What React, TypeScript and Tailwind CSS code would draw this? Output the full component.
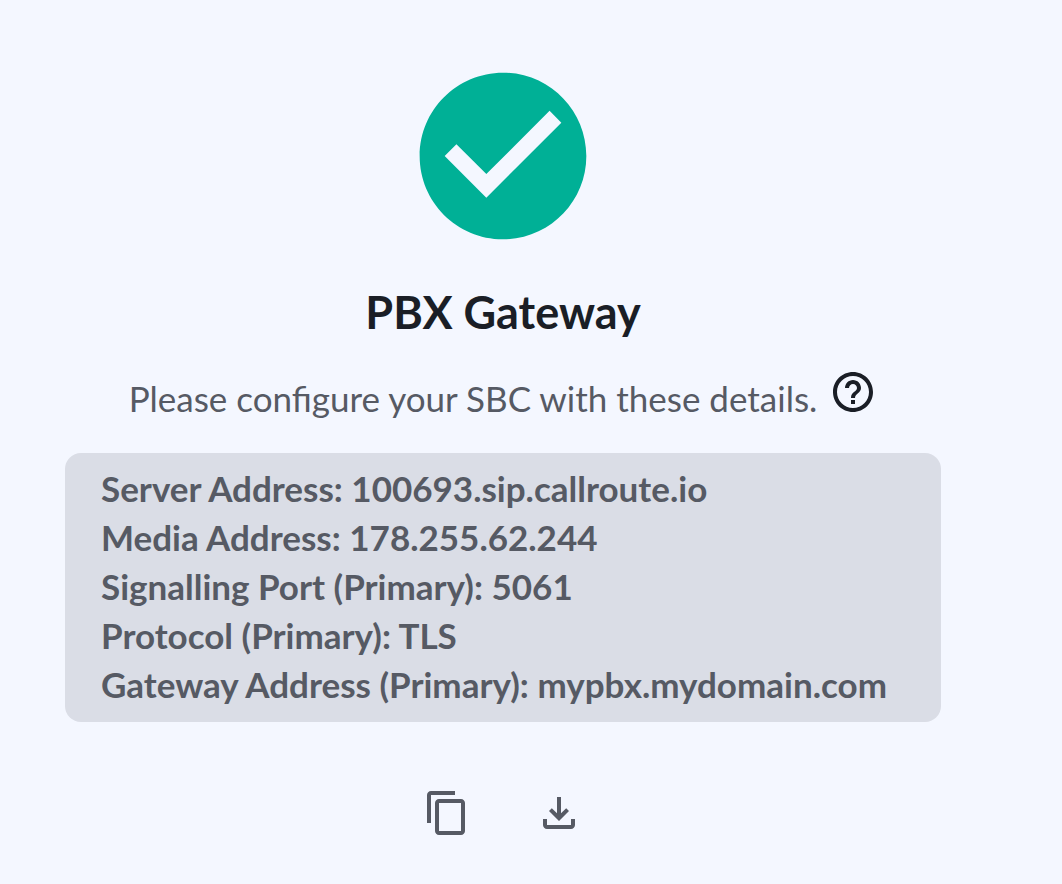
import React from "react";

const details = [
  { label: "Server Address", value: "100693.sip.callroute.io" },
  { label: "Media Address", value: "178.255.62.244" },
  { label: "Signalling Port (Primary)", value: "5061" },
  { label: "Protocol (Primary)", value: "TLS" },
  { label: "Gateway Address (Primary)", value: "mypbx.mydomain.com" },
];

export default function App() {
  return (
    <main className="flex min-h-screen flex-col items-center bg-[#f4f7ff] pt-[56px] pr-[121px] pb-[44px] pl-[65px] font-[Lato,sans-serif] text-[#565a64]">
      <svg viewBox="0 0 24 24" className="size-[200px]" aria-hidden="true">
        <path
          fill="#00b096"
          d="M12 2C6.48 2 2 6.48 2 12s4.480 10 10 10 10-4.480 10-10S17.520 2 12 2zm-2 15l-5-5 1.410-1.410L10 14.170l7.590-7.590L19 8l-9 9z"
        />
      </svg>
      <h1 className="mt-[28px] text-[45px] leading-[56px] font-bold text-[#1a1e26]">PBX Gateway</h1>
      <div className="mt-[28px] flex items-start gap-[12px]">
        <p className="pt-[6px] pb-[2px] text-[35px] leading-[48px]">Please configure your SBC with these details.</p>
        <button type="button" aria-label="Help" className="text-[#1a1e26]">
          <svg viewBox="0 0 24 24" className="size-[48px]" fill="currentColor" aria-hidden="true">
            <path d="M11 18h2v-2h-2v2zm1-16C6.480 2 2 6.480 2 12s4.480 10 10 10 10-4.480 10-10S17.520 2 12 2zm0 18c-4.410 0-8-3.590-8-8s3.590-8 8-8 8 3.590 8 8-3.590 8-8 8zm0-14c-2.210 0-4 1.790-4 4h2c0-1.100.9-2 2-2s2 .9 2 2c0 2-3 1.750-3 5h2c0-2.250 3-2.500 3-5 0-2.210-1.790-4-4-4z" />
          </svg>
        </button>
      </div>
      <ul className="mt-[29px] w-full rounded-[16px] bg-[#dadde6] px-[36px] pt-[11px] pb-[13px] text-[35px] leading-[49px] font-bold">
        {details.map((item) => (
          <li key={item.label}>
            {item.label}: {item.value}
          </li>
        ))}
      </ul>
      <div className="mt-[67px] flex items-center gap-[64px]">
        <button type="button" aria-label="Copy">
          <svg viewBox="0 0 24 24" className="size-[48px]" fill="currentColor" aria-hidden="true">
            <path d="M16 1H4c-1.100 0-2 .9-2 2v14h2V3h12V1zm3 4H8c-1.100 0-2 .9-2 2v14c0 1.100.9 2 2 2h11c1.100 0 2-.9 2-2V7c0-1.100-.9-2-2-2zm0 16H8V7h11v14z" />
          </svg>
        </button>
        <button type="button" aria-label="Download">
          <svg viewBox="0 0 24 24" className="size-[48px]" fill="currentColor" aria-hidden="true">
            <path d="M18 15v3H6v-3H4v3c0 1.100.9 2 2 2h12c1.100 0 2-.9 2-2v-3h-2zm-1-4l-1.410-1.410L13 12.170V4h-2v8.170L8.410 9.590 7 11l5 5 5-5z" />
          </svg>
        </button>
      </div>
    </main>
  );
}
